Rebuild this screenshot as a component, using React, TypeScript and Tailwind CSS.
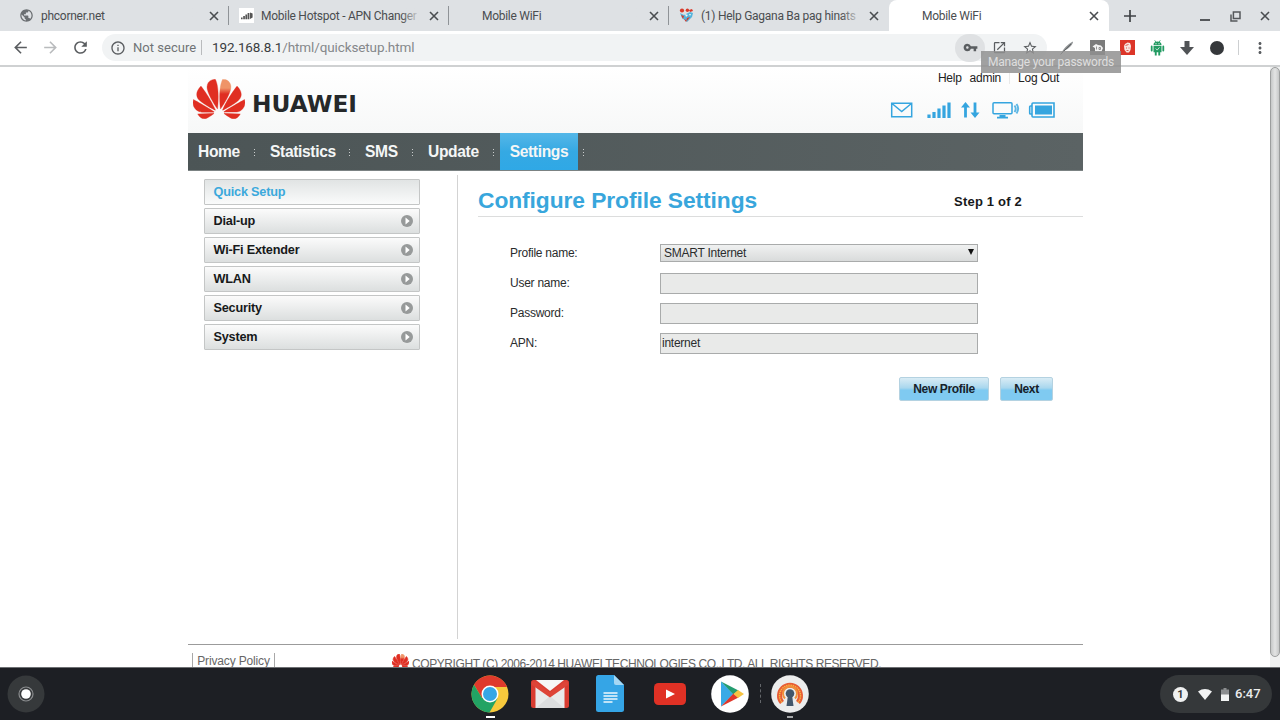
import React from "react";
import {
  MdArrowBack,
  MdArrowForward,
  MdInfoOutline,
  MdMoreVert,
  MdOpenInNew,
  MdPublic,
  MdRefresh,
  MdStarBorder,
  MdVpnKey,
} from "react-icons/md";

const PETALS =
  "M3.67 6.14S1.82 7.91 1.72 9.78v.35c.08 1.51 1.22 2.4 1.22 2.4 1.83 1.79 6.26 4.04 7.3 4.55 0 0 .06.03.1-.01l.02-.04v-.04C7.52 10.8 3.67 6.14 3.67 6.14zM9.65 18.6c-.02-.08-.1-.08-.1-.08l-7.38.26c.8 1.43 2.15 2.53 3.56 2.2.96-.25 3.16-1.78 3.88-2.3.06-.05.04-.09.04-.09zm.08-.78C6.49 15.63.21 12.28.21 12.28c-.15.46-.2.9-.21 1.3v.07c0 1.07.4 1.82.4 1.82.8 1.69 2.34 2.2 2.34 2.2.7.3 1.4.31 1.4.31.12.02 4.4 0 5.54 0 .05 0 .08-.05.08-.05v-.06c0-.03-.03-.05-.03-.05zM9.06 3.19a3.42 3.42 0 00-2.57 3.15v.41c.03.6.16 1.05.16 1.05.66 2.9 3.86 7.65 4.55 8.65.05.05.1.03.1.03a.1.1 0 00.06-.1c1.06-10.6-1.11-13.42-1.11-13.42-.32.02-1.19.23-1.19.23zm5.38 15.34s-.07 0-.09.05c0 0-.01.07.03.1.7.51 2.85 2 3.88 2.3 0 0 .16.05.43.06h.14c.69-.02 1.9-.37 3-2.26l-7.4-.25zm7.83-8.41c.14-2.06-1.94-3.97-1.94-3.98 0 0-3.85 4.66-6.67 10.8 0 0-.03.08.02.13l.04.01h.06c1.06-.53 5.46-2.77 7.28-4.54 0 0 1.15-.93 1.21-2.42zm1.52 2.14s-6.28 3.37-9.52 5.55c0 0-.05.04-.03.11 0 0 .03.06.07.06 1.16 0 5.56 0 5.67-.02 0 0 .57-.02 1.27-.29 0 0 1.56-.5 2.37-2.27 0 0 .73-1.45.17-3.14z";
const LIGHT_PETAL =
  "M17.359 5.46s-.49-1.8-2.44-2.28c0 0-.57-.14-1.17-.22 0 0-2.18 2.81-1.12 13.43.01.07.06.08.06.08.07.03.1-.03.1-.03.72-1.03 3.9-5.76 4.55-8.64 0 0 .36-1.4.02-2.34z";

function HuaweiMark({ className, id, weight = 0 }: { className: string; id: string; weight?: number }) {
  return (
    <svg viewBox="0 2.9 24 18.2" preserveAspectRatio="none" className={className}>
      <defs>
        <linearGradient id={id} x1="0" y1="0" x2="0" y2="1">
          <stop offset="0.3" stopColor="#ef9468" />
          <stop offset="0.5" stopColor="#e02e22" />
        </linearGradient>
      </defs>
      <path d={PETALS} fill="#e02e22" stroke="#e02e22" strokeWidth={weight} />
      <path d={LIGHT_PETAL} fill={`url(#${id})`} stroke={`url(#${id})`} strokeWidth={weight} />
    </svg>
  );
}

function Cross({ className }: { className: string }) {
  return (
    <svg viewBox="0 0 10 10" className={"shrink-0 fill-none stroke-[#4a4d50] stroke-[1.600] " + className}>
      <path d="M1 1l8 8M9 1L1 9" />
    </svg>
  );
}

function SignalFavicon() {
  return (
    <svg viewBox="0 0 15 15" className="h-[15px] w-[15px] shrink-0">
      <rect width="15" height="15" fill="#fff" />
      <path d="M2 9.500h1.600v1.700H2zM4.200 8h1.700v3.200H4.200zM6.400 6.500h1.700v4.700H6.400zM8.600 5h1.800v6.200H8.600zM11 4.500l2.600 1v4l-2.600 1.600z" fill="#555" />
    </svg>
  );
}

function HeartFavicon() {
  return (
    <svg viewBox="0 0 15 15" className="h-[15px] w-[15px] shrink-0">
      <path d="M1 5l4 2 2-1 4-2 3 1-1 4-5 5-5-4z" fill="#55b4dc" />
      <circle cx="3" cy="2.500" r="2.100" fill="#d83a2b" />
      <circle cx="8.400" cy="2.200" r="1.700" fill="#d83a2b" />
      <path d="M2 7l3 1-1 3zM10 2l3-1 1 2-3 1zM8 10l3-1-4 5zM5 11l2 1v2z" fill="#d83a2b" />
      <path d="M6 6l3 1-2 2zM10 6l2 0-1 2z" fill="#f3f6f8" />
    </svg>
  );
}

type TabInfo = { title: string; icon?: React.ReactNode; active?: boolean; divider?: boolean };

const TABS: TabInfo[] = [
  { title: "phcorner.net", icon: <MdPublic className="h-[15px] w-[15px] shrink-0 text-[#6b6f72]" />, divider: true },
  { title: "Mobile Hotspot - APN Changer", icon: <SignalFavicon />, divider: true },
  { title: "Mobile WiFi", divider: true },
  { title: "(1) Help Gagana Ba pag hinats", icon: <HeartFavicon /> },
  { title: "Mobile WiFi", active: true },
];

function Tab({ tab }: { tab: TabInfo }) {
  return (
    <div
      className={
        "flex h-[31px] w-[220px] shrink-0 items-center pl-[10px] " +
        (tab.active ? "rounded-t-[8px] bg-white" : "")
      }
    >
      {tab.icon ?? <span className="w-[15px] shrink-0" />}
      <span
        className={
          "relative w-[158px] pr-px text-[12px] leading-[16px] whitespace-nowrap text-[#4a4d50] " +
          (tab.icon ? "ml-[7px] tracking-[-0.270px]" : "ml-[8px] mr-[-1px] tracking-[-0.280px]")
        }
      >
        {tab.title}
        {!tab.active && (
          <span className="absolute inset-y-0 right-0 w-[18px] bg-linear-to-r from-[#dee1e4]/0 to-[#dee1e4]/90" />
        )}
      </span>
      <Cross className="ml-[10px] h-[10px] w-[10px]" />
      {tab.divider && <span className="ml-[9px] h-[19px] w-px shrink-0 bg-[#8f9397]" />}
    </div>
  );
}

function TabStrip() {
  return (
    <div className="flex h-[31px] shrink-0 items-center bg-[#dee1e4] pl-[9px]">
      {TABS.map((t, i) => (
        <Tab key={i} tab={t} />
      ))}
      <svg viewBox="0 0 12 12" className="ml-[15px] h-[12px] w-[12px] shrink-0 stroke-[#3f4245] stroke-[1.700]">
        <path d="M6 0v12M0 6h12" />
      </svg>
      <span className="mt-[9px] ml-[64px] h-[2px] w-[10px] shrink-0 bg-[#55585b]" />
      <svg viewBox="0 0 11 11" className="mt-[2px] ml-[20px] h-[11px] w-[11px] shrink-0 fill-none stroke-[#55585b] stroke-[1.500]">
        <path d="M3.400 1h6.600v6.600H3.400zM1 3.500V10h6.500" />
      </svg>
      <Cross className="mt-px ml-[19px] h-[10px] w-[10px]" />
    </div>
  );
}

function Robot() {
  return (
    <svg viewBox="0 0 15 16" className="ml-[15px] h-[16px] w-[15px]">
      <path d="M3.500 5Q3.500 1.500 7.500 1.500T11.500 5zM3.500 5.700h8v6.500h-8zM4.800 12h1.900v3.500H4.800zM8.300 12h1.900v3.500H8.300z" fill="#229b62" />
      <path d="M1.700 6.500v4M13.300 6.500v4" stroke="#229b62" strokeWidth="1.800" strokeLinecap="round" />
      <path d="M4.700.300l1.200 1.900M10.300.300L9.100 2.200" stroke="#229b62" strokeWidth="0.800" />
      <path d="M5.500 3.300h1v1h-1zM8.500 3.300h1v1h-1z" fill="#fff" />
      <path d="M5.700 8.500l1.500 1.600 2.300-2.800" stroke="#fff" strokeWidth="0.700" fill="none" />
    </svg>
  );
}

function Toolbar() {
  return (
    <div className="relative flex h-[34px] shrink-0 items-center bg-white pb-px text-[#5a5d60]">
      <MdArrowBack className="ml-[11px] h-[19px] w-[19px]" />
      <MdArrowForward className="ml-[11px] h-[19px] w-[19px] text-[#b9bbbd]" />
      <MdRefresh className="ml-[11px] h-[19px] w-[19px]" />
      <div className="ml-[12px] flex h-[27px] w-[945px] items-center rounded-full bg-[#f1f3f4] pl-[8px]">
        <MdInfoOutline className="h-[16px] w-[16px]" />
        <span className="ml-[7px] w-[68px] text-[13px] tracking-[0.030px] whitespace-nowrap text-[#707376]">Not secure</span>
        <span className="h-[15px] w-px bg-[#b9bbbd]" />
        <span className="ml-[10px] w-[652px] text-[13.500px] tracking-[-0.110px] whitespace-nowrap text-[#85888b]">
          <span className="text-[#3a3d40]">192.168.8.1</span>/html/quicksetup.html
        </span>
        <span className="ml-[91px] flex h-[28px] w-[30px] items-center justify-center rounded-full bg-[#dfe1e3]">
          <MdVpnKey className="h-[15px] w-[15px]" />
        </span>
        <MdOpenInNew className="ml-[7px] h-[15px] w-[15px]" />
        <MdStarBorder className="ml-[15px] h-[16px] w-[16px]" />
      </div>
      <svg viewBox="0 0 16 16" className="ml-[12px] h-[16px] w-[16px]">
        <path d="M2 14C4 9 9 4 14 1.500c0 3-4 7-9 9.500z" fill="#8d9092" />
        <path d="M1.500 14.500L12 4" stroke="#5a5d60" strokeWidth="0.900" />
      </svg>
      <svg viewBox="0 0 15 15" className="ml-[15px] h-[15px] w-[15px]">
        <rect width="15" height="15" fill="#7b7b7b" />
        <path d="M2.500 6.500L6 4l2 1 3 .500 2 2.500-1.500 3.500H5V8z" fill="#f3f3f3" />
        <path d="M6.500 6.500v3M9 7.500h1.500v2H9z" fill="none" stroke="#7b7b7b" strokeWidth="0.800" />
      </svg>
      <svg viewBox="0 0 15 15" className="ml-[15px] h-[15px] w-[15px]">
        <rect width="15" height="15" fill="#dc3528" />
        <path d="M4 6l1-2 2.500-1.500L10 3l1 3-.500 4L9 12.500H6.500L4.500 10z" fill="#f8e6e1" />
        <path d="M5.500 5.500l3-1M6 8h1M8.500 8h1M6.500 10.500h2" stroke="#dc3528" strokeWidth="0.800" />
      </svg>
      <Robot />
      <svg viewBox="0 0 14 14" className="ml-[15px] h-[14px] w-[14px]">
        <path d="M4.500 0h5v6H14l-7 8-7-8h4.500z" fill="#505356" />
      </svg>
      <span className="ml-[16px] h-[14px] w-[14px] rounded-full bg-[#35383b]" />
      <span className="ml-[14px] h-[15px] w-px bg-[#cdcfd1]" />
      <MdMoreVert className="ml-[12px] h-[18px] w-[18px]" />
      <div className="absolute top-[20px] left-[981px] z-10 flex h-[22px] w-[140px] items-center justify-center bg-[#909090]/85 text-[12px] tracking-[-0.230px] whitespace-nowrap text-[#dedede]">
        Manage your passwords
      </div>
    </div>
  );
}

function StatusIcons() {
  return (
    <svg viewBox="0 0 166 18" className="h-[18px] w-[166px]" fill="none" stroke="#35a5df">
      <path d="M1.700 2.200h20v13.600h-20zM2 2.500l9.700 8 9.700-8" strokeWidth="1.500" />
      <path d="M39 13.500V17M44 11v6M49 7.500V17M54 4.500V17M59 1.500V17" strokeWidth="3.200" />
      <path d="M75.500 16.500V4M85 1.500V14" strokeWidth="2.800" />
      <path d="M71 6.500L75.500 1l4.500 5.500zM80.500 11.500l4.500 5.500 4.500-5.500z" fill="#35a5df" stroke="none" />
      <path d="M104 1.800h17q1 0 1 1v9q0 1-1 1h-17q-1 0-1-1v-9q0-1 1-1z" strokeWidth="1.500" />
      <path d="M109.500 15h6M107 16.700h11" strokeWidth="1.800" />
      <path d="M124.500 4.500q2.500 3.500 0 6.500M126.500 3q3.300 4.500 0 9.500" strokeWidth="1.900" opacity="0.800" />
      <path d="M143 2h21v14h-21q-1 0-1-1V3q0-1 1-1zM142 5h-1.500q-.800 0-.800.800v6.400q0 .800.800.800h1.500" strokeWidth="1.600" />
      <path d="M145 4.500h17v9h-17z" fill="#35a5df" stroke="none" />
    </svg>
  );
}

function PageHeader() {
  return (
    <header className="flex h-[66px] shrink-0 justify-between bg-linear-to-b from-white to-[#f7f8f8]">
      <div className="flex items-start pt-[12px] pl-[5px]">
        <HuaweiMark id="mark-large" className="h-[40px] w-[52px]" weight={0.15} />
        <span className="mt-[10px] ml-[7px] font-['DejaVu_Sans',sans-serif] text-[23.300px] leading-[30px] font-bold tracking-[0px] text-[#25282a]">
          HUAWEI
        </span>
      </div>
      <div className="flex flex-col items-end pr-[24px]">
        <div className="flex h-[16px] items-center pt-[6px] text-[12px] leading-[16px] tracking-[-0.250px] text-[#222]">
          <span>Help</span>
          <span className="ml-[8px]">admin</span>
          <span className="mr-[8px] ml-[8px] h-[11px] w-px bg-[#e9e9e9]" />
          <span>Log Out</span>
        </div>
        <div className="mt-[18px] mr-[3px]">
          <StatusIcons />
        </div>
      </div>
    </header>
  );
}

function NavDots() {
  return (
    <span className="flex flex-col gap-[2px] pt-[2px]">
      <i className="block h-px w-px bg-[#c9cccc]" />
      <i className="block h-px w-px bg-[#c9cccc]" />
      <i className="block h-px w-px bg-[#c9cccc]" />
    </span>
  );
}

function NavBar() {
  const item = "text-[15.600px] font-bold tracking-[-0.350px] whitespace-nowrap text-[#f4f6f6]";
  return (
    <nav className="flex h-[38px] shrink-0 items-center border-b border-[#7b8283] bg-linear-to-r from-[#4c5556] to-[#5b6364] pl-[10px]">
      <span className={item + " w-[56px]"}>Home</span>
      <NavDots />
      <span className={item + " ml-[15px] w-[79px]"}>Statistics</span>
      <NavDots />
      <span className={item + " ml-[15px] w-[47px]"}>SMS</span>
      <NavDots />
      <span className={item + " ml-[15px] w-[65px]"}>Update</span>
      <NavDots />
      <span className={item + " ml-[6px] flex h-[37px] w-[78px] items-center justify-center bg-linear-to-b from-[#54b7e8] via-[#35a9e3] to-[#2fa8e6]"}>
        Settings
      </span>
      <span className="ml-[5px]">
        <NavDots />
      </span>
    </nav>
  );
}

const MENU = ["Quick Setup", "Dial-up", "Wi-Fi Extender", "WLAN", "Security", "System"];

function SideMenu() {
  return (
    <aside className="flex w-[270px] shrink-0 flex-col gap-[3px] border-r border-[#d3d3d3] pt-[4px] pr-[37px] pl-[16px]">
      {MENU.map((label, i) => (
        <div
          key={label}
          className={
            "flex h-[26px] items-center justify-between rounded-[1px] border border-[#c4c6c6] pr-[6px] pl-[8.500px] text-[12.700px] font-bold tracking-[-0.200px] " +
            (i === 0
              ? "bg-linear-to-b from-[#e1e4e4] to-[#fafbfb] text-[#3ba9dc]"
              : "bg-linear-to-b from-[#fbfbfb] to-[#dcdfdf] text-[#17191a]")
          }
        >
          <span className="pt-px leading-[19px]">{label}</span>
          {i > 0 && (
            <svg viewBox="0 0 12 12" className="h-[12px] w-[12px]">
              <circle cx="6" cy="6" r="6" fill="#979a9a" />
              <path d="M4.500 2.500L8.700 6 4.500 9.500z" fill="#fff" />
            </svg>
          )}
        </div>
      ))}
    </aside>
  );
}

function Row({ label, children }: { label: string; children: React.ReactNode }) {
  return (
    <div className="flex h-[30px] items-center text-[12px] tracking-[-0.250px] text-[#2a2c2d]">
      <span className="w-[150px]">{label}</span>
      {children}
    </div>
  );
}

function ProfileForm() {
  const field = "flex h-[21px] w-[318px] items-center border border-[#a9abab] bg-[#e9eae9] pl-px";
  const button =
    "h-[24px] rounded-[2px] border border-[#b4d2e1] bg-linear-to-b from-[#d9ecf5] from-0% via-[#a9d7ee] via-45% to-[#7fcaf1] to-55% text-[12px] leading-[22px] font-bold tracking-[-0.350px] text-[#16212a]";
  return (
    <main className="flex-1 pl-[20px]">
      <div className="flex h-[42px] items-center justify-between border-b border-[#dcdddd] pt-[9px] pr-[61px]">
        <h1 className="text-[22.800px] leading-[30px] font-bold tracking-[-0.080px] text-[#38a6dc]">Configure Profile Settings</h1>
        <span className="mt-[3px] text-[13px] font-bold tracking-[0.200px] text-[#17191a]">Step 1 of 2</span>
      </div>
      <div className="flex flex-col pt-[21px] pl-[32px]">
        <Row label="Profile name:">
          <div className="flex h-[18px] w-[318px] items-center justify-between border border-[#a9abab] bg-linear-to-b from-[#f0f1f1] to-[#d9dbdb] pr-[3px] pl-[3px]">
            <span>SMART Internet</span>
            <svg viewBox="0 0 6 6" className="mb-[3px] h-[6px] w-[6px]">
              <path d="M0 0h6L3 6z" fill="#111" />
            </svg>
          </div>
        </Row>
        <Row label="User name:">
          <div className={field} />
        </Row>
        <Row label="Password:">
          <div className={field} />
        </Row>
        <Row label="APN:">
          <div className={field}>internet</div>
        </Row>
      </div>
      <div className="mt-[19px] flex justify-end gap-[11px] pr-[30px]">
        <button className={button + " w-[90px]"}>New Profile</button>
        <button className={button + " w-[53px]"}>Next</button>
      </div>
    </main>
  );
}

function PageFooter() {
  return (
    <footer className="mt-[5px] flex h-[23px] shrink-0 items-start border-t border-[#9b9b9b] pl-[4px] text-[12px] whitespace-nowrap text-[#666]">
      <span className="mt-[8px] flex h-[15px] w-[83px] justify-center border-x border-[#a8a8a8] leading-[17px] tracking-[-0.150px]">
        Privacy Policy
      </span>
      <HuaweiMark id="mark-small" className="mt-[9px] ml-[117px] h-[14px] w-[17px] shrink-0" weight={1} />
      <span className="mt-[10px] ml-[3px] leading-[18px] tracking-[-0.410px]">
        COPYRIGHT (C) 2006-2014 HUAWEI TECHNOLOGIES CO.,LTD. ALL RIGHTS RESERVED.
      </span>
    </footer>
  );
}

function Shelf() {
  return (
    <div className="relative flex h-[53px] shrink-0 items-start border-t border-[#6e7073] bg-[#1d1f24] pt-[7px]">
      <svg viewBox="0 0 38 38" className="ml-[7px] h-[38px] w-[38px]">
        <circle cx="19" cy="19" r="18.500" fill="#36393b" />
        <circle cx="19" cy="19" r="7" fill="none" stroke="#8b8d8f" strokeWidth="1.200" />
        <circle cx="19" cy="19" r="4.800" fill="#fff" />
      </svg>
      <div className="ml-[426px] flex w-[38px] flex-col items-center">
        <svg viewBox="0 0 38 38" className="h-[38px] w-[38px]">
          <circle cx="19" cy="19" r="18.500" fill="#f7c93c" />
          <path d="M3 9.800A18.500 18.500 0 0 1 35 9.800L36 12H19L11 23z" fill="#df3a2c" />
          <path d="M3 9.800A18.500 18.500 0 0 0 18.500 37.500L26.500 23.500 11 23z" fill="#22a364" />
          <circle cx="19" cy="19" r="8.500" fill="#fff" />
          <circle cx="19" cy="19" r="7" fill="#37a7e6" />
        </svg>
        <span className="mt-[3px] h-[2px] w-[9px] bg-white" />
      </div>
      <svg viewBox="0 0 38 28" className="mt-[5px] ml-[22px] h-[28px] w-[38px]">
        <rect width="38" height="28" rx="2.500" fill="#d93c31" />
        <path d="M4.500 5v23h29V5L19 17z" fill="#e9eaeb" />
        <path d="M5 0h28L19 11z" fill="#f6f7f7" />
        <path d="M5 28l14-12 14 12z" fill="#dcdddf" />
        <path d="M1 1.500h3.500L19 12.500 33.500 1.500H37V5L19 17.500 1 5z" fill="#de4438" />
      </svg>
      <svg viewBox="0 0 28 37" className="ml-[27px] h-[37px] w-[28px]">
        <path d="M2.500 0H18l10 10v24.500q0 2.500-2.500 2.500h-23Q0 37 0 34.500v-32Q0 0 2.500 0z" fill="#35a5e6" />
        <path d="M18 0l10 10H20q-2 0-2-2z" fill="#a5d7f4" />
        <path d="M7.500 18h14M7.500 21h14M7.500 24h14M7.500 27h9" stroke="#edf7fd" strokeWidth="1.500" />
      </svg>
      <svg viewBox="0 0 32 22" className="mt-[8px] ml-[30px] h-[22px] w-[32px]">
        <rect width="32" height="22" rx="4.500" fill="#e03125" />
        <path d="M12 6.500l9 4.500-9 4.500z" fill="#fff" />
      </svg>
      <svg viewBox="0 0 38 38" className="ml-[25px] h-[38px] w-[38px]">
        <circle cx="19" cy="19" r="18.800" fill="#fff" />
        <path d="M10 6.500v25L22.500 19z" fill="#39aae6" />
        <path d="M10 6.500L27.500 15.500 22.500 19.500z" fill="#249d70" />
        <path d="M10 31.500L27.500 22.500 22.500 18.500z" fill="#e0372b" />
        <path d="M27 15l6 4-6 4-4.500-4z" fill="#f7c342" />
      </svg>
      <span className="mt-[9px] ml-[11px] h-[19px] border-l border-dashed border-[#63666a]" />
      <div className="ml-[10px] flex w-[38px] flex-col items-center">
        <svg viewBox="0 0 38 38" className="h-[38px] w-[38px]" fill="none">
          <circle cx="19" cy="19" r="18.800" fill="#eceded" />
          <path d="M11 27.500A10.500 10.500 0 1 1 27 27.500" stroke="#e85c34" strokeWidth="5" />
          <path d="M11 27.500A10.500 10.500 0 1 1 27 27.500" stroke="#f6b545" strokeWidth="1.500" strokeDasharray="1.500 0.700" />
          <path d="M14 23.500A7 7 0 1 1 24 23.500" stroke="#f0913b" strokeWidth="2" />
          <circle cx="19" cy="18.500" r="4.300" fill="#43576b" />
          <path d="M17 20h4l1.500 11h-7z" fill="#43576b" />
        </svg>
        <span className="mt-[3px] h-[2px] w-[6px] bg-[#a5a7a9]" />
      </div>
      <div className="ml-[351px] flex h-[38px] w-[112px] items-center rounded-full bg-[#35383a] pl-[13px]">
        <span className="flex h-[15px] w-[15px] items-center justify-center rounded-full bg-[#eff0f0] text-[11px] leading-[15px] font-bold text-[#35383a]">
          1
        </span>
        <svg viewBox="0 0 14 11" className="ml-[10px] h-[11px] w-[14px]">
          <path d="M0 2.500Q7-2.300 14 2.500L7 11z" fill="#f2f3f3" />
        </svg>
        <svg viewBox="0 0 8 13" className="ml-[9px] h-[13px] w-[8px]">
          <path d="M2.500 0h3v1.500H8V13H0V1.500h2.500z" fill="#8b8d8f" />
          <path d="M0 6.500h8V13H0z" fill="#f2f3f3" />
        </svg>
        <span className="ml-[6px] text-[13px] font-medium text-[#eceded]">6:47</span>
      </div>
    </div>
  );
}

export default function App() {
  return (
    <div className="flex h-[720px] w-[1280px] flex-col overflow-hidden bg-white font-['Roboto',sans-serif]">
      <TabStrip />
      <Toolbar />
      <div className="flex h-[602px] shrink-0 justify-between border-t-2 border-[#cfd1d2] font-['Liberation_Sans',sans-serif]">
        <div className="ml-[188px] flex h-[600px] w-[895px] flex-col">
          <PageHeader />
          <NavBar />
          <div className="mt-[4px] flex h-[464px] shrink-0">
            <SideMenu />
            <ProfileForm />
          </div>
          <PageFooter />
        </div>
        <div className="h-[600px] w-[10px] bg-[#f0f1f1]">
          <div className="h-[590px] rounded-full border border-[#9c9e9e] bg-linear-to-r from-[#c6c8c8] via-[#e3e4e4] to-[#c6c8c8]" />
        </div>
      </div>
      <Shelf />
    </div>
  );
}
